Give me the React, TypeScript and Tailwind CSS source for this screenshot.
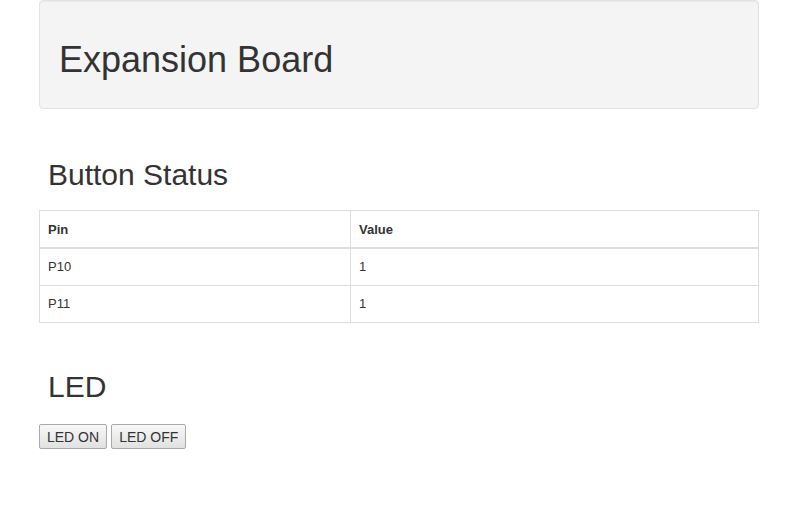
import React from 'react';

const pins = [
  { pin: 'P10', value: '1' },
  { pin: 'P11', value: '1' },
];

export default function App() {
  return (
    <div
      className="min-h-[506px] w-[796px] bg-white text-[#333]"
      style={{ fontFamily: '"Liberation Sans", Arial, sans-serif' }}
    >
      <div className="ml-[39px] w-[720px]">
        {/* Header well */}
        <div className="box-border h-[109px] rounded border border-[#e3e3e3] bg-[#f4f4f4] px-[19px] pt-[39px] shadow-[inset_0_1px_1px_rgba(0,0,0,0.05)]">
          <h1 className="text-[36px] leading-[39.6px] font-normal">Expansion Board</h1>
        </div>

        {/* Button status */}
        <h2 className="mt-[49px] mb-[19px] pl-[9px] text-[30px] leading-[33px] font-normal">Button Status</h2>
        <table className="w-full border-collapse border border-[#ddd] text-[13px] leading-[20px]">
          <thead>
            <tr>
              <th className="w-[311px] border border-b-2 border-[#ddd] px-2 pt-[9px] pb-[7px] text-left font-bold">Pin</th>
              <th className="border border-b-2 border-[#ddd] px-2 pt-[9px] pb-[7px] text-left font-bold">Value</th>
            </tr>
          </thead>
          <tbody>
            {pins.map((p) => (
              <tr key={p.pin}>
                <td className="border border-[#ddd] px-2 py-2">{p.pin}</td>
                <td className="border border-[#ddd] px-2 py-2">{p.value}</td>
              </tr>
            ))}
          </tbody>
        </table>

        {/* LED controls */}
        <h2 className="mt-[47px] mb-[21px] pl-[9px] text-[30px] leading-[33px] font-normal">LED</h2>
        <div className="flex gap-[4px]">
          <button className="box-border h-[25px] rounded-[2px] border border-[#a9a9a9] bg-gradient-to-b from-[#f8f8f8] to-[#e1e1e1] px-[7px] text-[14px] leading-[16px] text-[#333]">
            LED ON
          </button>
          <button className="box-border h-[25px] rounded-[2px] border border-[#a9a9a9] bg-gradient-to-b from-[#f8f8f8] to-[#e1e1e1] px-[7px] text-[14px] leading-[16px] text-[#333]">
            LED OFF
          </button>
        </div>
      </div>
    </div>
  );
}
